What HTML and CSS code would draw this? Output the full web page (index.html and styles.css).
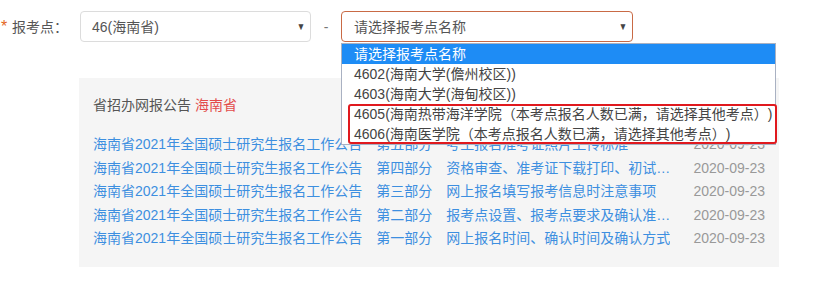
FILE: index.html
```html
<!DOCTYPE html>
<html lang="zh-CN">
<head>
  <meta charset="UTF-8">
  <title>报考点选择</title>
  <link rel="stylesheet" href="styles.css">
</head>
<body>
  <div class="form-row">
    <label class="form-label"><span class="required">*</span>报考点：</label>
    <div class="select select-province">
      <span class="select-text">46(海南省)</span>
      <span class="select-arrow">&#9660;</span>
    </div>
    <span class="dash">-</span>
    <div class="select select-site">
      <span class="select-text">请选择报考点名称</span>
      <span class="select-arrow">&#9660;</span>
      <!-- open option list -->
      <ul class="option-list">
        <li class="option active">请选择报考点名称</li>
        <li class="option">4602(海南大学(儋州校区))</li>
        <li class="option">4603(海南大学(海甸校区))</li>
        <li class="option">4605(海南热带海洋学院（本考点报名人数已满，请选择其他考点）)</li>
        <li class="option">4606(海南医学院（本考点报名人数已满，请选择其他考点）)</li>
        <li class="full-mark"></li>
      </ul>
    </div>
  </div>

  <div class="notice-panel">
    <div class="notice-title">省招办网报公告 <span class="province">海南省</span></div>
    <ul class="notice-list">
      <li class="notice">
        <a class="n-title">海南省2021年全国硕士研究生报名工作公告</a>
        <a class="n-part">第五部分</a>
        <a class="n-desc">考生报名准考证照片上传标准</a>
        <span class="n-date">2020-09-23</span>
      </li>
      <li class="notice">
        <a class="n-title">海南省2021年全国硕士研究生报名工作公告</a>
        <a class="n-part">第四部分</a>
        <a class="n-desc">资格审查、准考证下载打印、初试考场规则</a>
        <span class="n-date">2020-09-23</span>
      </li>
      <li class="notice">
        <a class="n-title">海南省2021年全国硕士研究生报名工作公告</a>
        <a class="n-part">第三部分</a>
        <a class="n-desc">网上报名填写报考信息时注意事项</a>
        <span class="n-date">2020-09-23</span>
      </li>
      <li class="notice">
        <a class="n-title">海南省2021年全国硕士研究生报名工作公告</a>
        <a class="n-part">第二部分</a>
        <a class="n-desc">报考点设置、报考点要求及确认准考证事宜</a>
        <span class="n-date">2020-09-23</span>
      </li>
      <li class="notice">
        <a class="n-title">海南省2021年全国硕士研究生报名工作公告</a>
        <a class="n-part">第一部分</a>
        <a class="n-desc">网上报名时间、确认时间及确认方式</a>
        <span class="n-date">2020-09-23</span>
      </li>
    </ul>
  </div>
</body>
</html>
```

FILE: styles.css
```css
body {
  margin: 0;
  background: #fff;
  color: #333;
  font-family: 'Liberation Sans', 'Noto Sans CJK SC', sans-serif;
  font-size: 14px;
  text-spacing-trim: space-all;
}
ul {
  list-style: none;
  margin: 0;
  padding: 0;
}
.form-row {
  display: flex;
  align-items: center;
  padding-top: 11px;
  height: 31px;
  position: relative;
  z-index: 2;
}
.form-label {
  width: 80px;
  color: #555;
  line-height: 31px;
}
.required {
  color: #e4661e;
  display: inline-block;
  width: 12px;
  padding-left: 1px;
  box-sizing: border-box;
  font-size: 16px;
}
.select {
  position: relative;
  box-sizing: border-box;
  height: 31px;
  border: 1px solid #dcdcdc;
  border-radius: 4px;
  background: #fff;
  display: flex;
  align-items: center;
  padding-left: 11px;
  color: #555;
}
.select-province {
  width: 231px;
}
.select-site {
  width: 292px;
  border-color: #c96a45;
  padding-left: 12px;
}
.select-text {
  flex: 1;
  line-height: 20px;
}
.select-arrow {
  font-size: 10px;
  color: #444;
  margin-right: 4px;
  transform: scaleX(0.85);
}
.dash {
  width: 30px;
  text-align: center;
  color: #777;
}
.option-list {
  position: absolute;
  left: -1px;
  top: 31px;
  width: 435px;
  box-sizing: border-box;
  border: 1px solid #a9b1c2;
  background: #fff;
}
.option {
  height: 20px;
  line-height: 20px;
  padding-left: 12px;
  color: #444;
  white-space: nowrap;
}
.option.active {
  background: #1e8cf5;
  color: #fff;
}
.full-mark {
  position: absolute;
  left: 6px;
  top: 60px;
  width: 429px;
  height: 40px;
  box-sizing: border-box;
  border: 2px solid #e0191e;
  border-radius: 3px;
}
.notice-panel {
  margin: 36px 0 0 79px;
  width: 700px;
  height: 189px;
  box-sizing: border-box;
  background: #f5f5f5;
  padding: 17px 14px 0 14px;
}
.notice-title {
  line-height: 20px;
  color: #555;
  margin-bottom: 18px;
}
.province {
  color: #e34b4b;
}
.notice {
  display: flex;
  line-height: 23.5px;
  white-space: nowrap;
}
.notice a {
  color: #3d8fe0;
  text-decoration: none;
}
.n-title {
  margin-right: 14px;
}
.n-part {
  margin-right: 14px;
}
.n-desc {
  width: 224px;
  overflow: hidden;
  text-overflow: ellipsis;
}
.n-date {
  margin-left: auto;
  color: #999;
}
```
